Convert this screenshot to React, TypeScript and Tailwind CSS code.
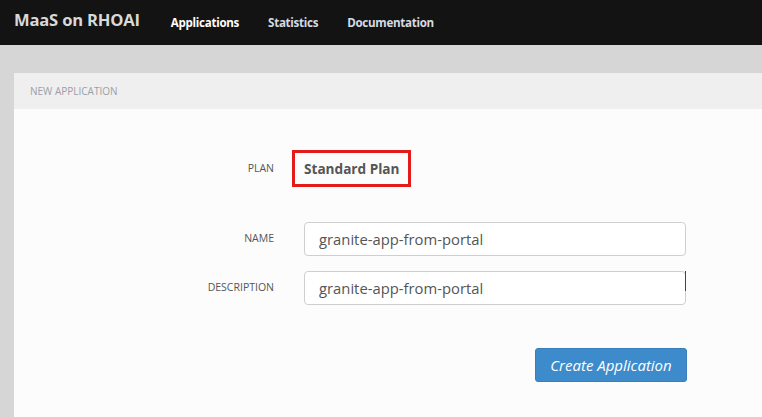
import React from 'react';

const font = { fontFamily: '"Open Sans", "Noto Sans", sans-serif' };

const NavBar: React.FC = () => (
  <div className="h-[45px] bg-[#131313] flex items-center px-[14px]">
    <span className="text-[16.6px] font-bold text-[#d8d8d8] tracking-[-0.2px] mr-[31px] -mt-[4px]">MaaS on RHOAI</span>
    <nav className="flex items-center gap-[29px] text-[11.6px] font-bold tracking-[-0.3px]">
      <span className="text-white">Applications</span>
      <span className="text-[#d4dbe3]">Statistics</span>
      <span className="text-[#d4dbe3]">Documentation</span>
    </nav>
  </div>
);

const Row: React.FC<{ label: string; children: React.ReactNode; className?: string }> = ({ label, children, className }) => (
  <div className={`flex items-center ${className ?? ''}`}>
    <div className="w-[260px] text-right text-[10.5px] uppercase text-[#555]">{label}</div>
    <div className="ml-[30px] flex-1">{children}</div>
  </div>
);

export default function App() {
  return (
    <div className="min-h-screen bg-[#d6d6d6]" style={font}>
      <NavBar />
      <div className="pl-[14px] pt-[28px]">
        <div className="bg-[#fcfcfc] min-h-[344px]">
          <div className="h-[36px] bg-[#efefef] flex items-center pl-[16px]">
            <span className="text-[10px] uppercase text-[#9a9fa8]">New Application</span>
          </div>
          <div className="pt-[41px]">
            <Row label="Plan">
              <div className="inline-block -ml-[12px] border-[3px] border-[#e31b1b] px-[9px] h-[37px] leading-[31px] text-[13.6px] font-bold text-[#555]">
                Standard Plan
              </div>
            </Row>
            <Row label="Name" className="mt-[35px]">
              <input
                readOnly
                value="granite-app-from-portal"
                className="w-[382px] h-[34px] bg-white border border-[#cfcfcf] rounded-[4px] pl-[14px] text-[14.8px] text-[#555] outline-none"
              />
            </Row>
            <Row label="Description" className="mt-[15px]">
              <div className="relative w-[382px]">
                <input
                  readOnly
                  value="granite-app-from-portal"
                  className="w-[382px] h-[34px] bg-white border border-[#cfcfcf] rounded-[4px] pl-[14px] text-[14.8px] text-[#555] outline-none"
                />
                <span className="absolute right-0 top-0 w-[1px] h-[20px] bg-[#444]" />
              </div>
            </Row>
            <div className="flex mt-[43px] pl-[521px]">
              <button className="w-[152px] h-[34px] bg-[#3d8bcb] border border-[#3a7fbb] rounded-[3px] text-white italic text-[15px]">
                Create Application
              </button>
            </div>
          </div>
        </div>
      </div>
    </div>
  );
}
